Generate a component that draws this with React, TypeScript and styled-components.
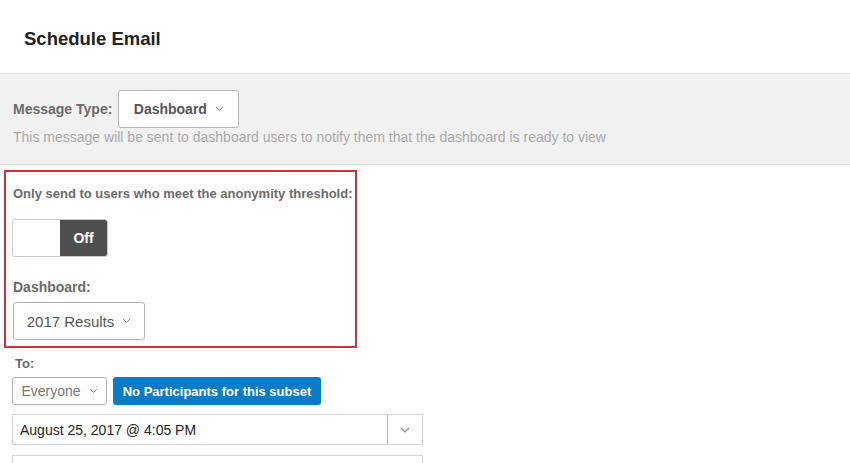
import React, { useState } from 'react'
import styled, { createGlobalStyle } from 'styled-components'

const Global = createGlobalStyle`
  html, body {
    margin: 0;
    padding: 0;
    background: #fff;
    font-family: "Liberation Sans", Arial, sans-serif;
  }
`

const Page = styled.div`
  width: 850px;
  height: 463px;
  overflow: hidden;
  background: #fff;
`

const Header = styled.div`
  height: 73px;
  display: flex;
  align-items: center;
  padding-left: 24px;
  box-sizing: border-box;
`

const Title = styled.h1`
  margin: 0;
  font-size: 18.5px;
  font-weight: bold;
  color: #222;
  padding-top: 4px;
`

const Band = styled.div`
  background: #f1f1f1;
  border-top: 1px solid #e6e6e6;
  border-bottom: 1px solid #dcdcdc;
  height: 92px;
  box-sizing: border-box;
  padding: 16px 0 0 13px;
`

const InlineRow = styled.div`
  display: flex;
  align-items: center;
  gap: 6px;
`

const Label = styled.div<{ $size?: number }>`
  font-size: ${p => p.$size ?? 13}px;
  font-weight: bold;
  color: #6b6b6b;
`

const Help = styled.div`
  margin-top: 1px;
  font-size: 14px;
  color: #aaa;
`

const Select = styled.div<{ $w: number; $h: number; $size?: number; $bold?: boolean; $color?: string }>`
  width: ${p => p.$w}px;
  height: ${p => p.$h}px;
  box-sizing: border-box;
  border: 1px solid #b5b5b5;
  border-radius: 3px;
  background: #fff;
  display: flex;
  align-items: center;
  justify-content: center;
  gap: 8px;
  font-size: ${p => p.$size ?? 14}px;
  font-weight: ${p => (p.$bold ? 'bold' : 'normal')};
  color: ${p => p.$color ?? '#555'};
`

const Chevron = ({ size = 9 }: { size?: number }) => (
  <svg width={size} height={size * 0.6} viewBox="0 0 10 6" fill="none">
    <path d="M1 1l4 4 4-4" stroke="#888" strokeWidth="1.1" />
  </svg>
)

const Body = styled.div`
  padding: 5px 0 0 4px;
`

const Highlight = styled.div`
  width: 353px;
  height: 178px;
  box-sizing: border-box;
  border: 2px solid #c9343f;
  padding: 14px 0 0 7px;
`

const Field = styled.div<{ $gap: number }>`
  display: flex;
  flex-direction: column;
  align-items: flex-start;
  gap: ${p => p.$gap}px;
`

const Toggle = styled.button`
  margin: 18px 0 22px -1px;
  width: 96px;
  height: 38px;
  padding: 0;
  display: flex;
  border: 1px solid #c8c8c8;
  border-radius: 3px;
  overflow: hidden;
  background: #fff;
  cursor: pointer;
  font-family: inherit;
`

const ToggleHalf = styled.span<{ $on: boolean }>`
  flex: 1;
  display: flex;
  align-items: center;
  justify-content: center;
  background: ${p => (p.$on ? '#4f4f4f' : '#fff')};
  color: #fff;
  font-size: 14px;
  font-weight: bold;
`

const Lower = styled.div`
  padding: 8px 0 0 12px;
`

const ToLabel = styled(Label)`
  padding-left: 3px;
  margin-bottom: 6px;
`

const Row = styled.div`
  display: flex;
  align-items: center;
  gap: 6px;
`

const BlueButton = styled.button`
  height: 28px;
  width: 208px;
  border: none;
  border-radius: 3px;
  background: #0a7bc6;
  color: #fff;
  font-family: inherit;
  font-size: 13px;
  font-weight: bold;
  padding: 0;
`

const DateInput = styled.div`
  margin-top: 9px;
  width: 411px;
  height: 31px;
  box-sizing: border-box;
  border: 1px solid #d6d6d6;
  display: flex;
  align-items: stretch;
  background: #fff;
`

const DateText = styled.div`
  flex: 1;
  display: flex;
  align-items: center;
  padding-left: 7px;
  font-size: 14px;
  color: #222;
`

const DateButton = styled.div`
  width: 34px;
  border-left: 1px solid #b8b8b8;
  display: flex;
  align-items: center;
  justify-content: center;
`

const NextInput = styled.div`
  margin-top: 10px;
  width: 411px;
  height: 30px;
  box-sizing: border-box;
  border: 1px solid #d6d6d6;
`

export default function App() {
  const [on, setOn] = useState(false)
  return (
    <Page>
      <Global />
      <Header>
        <Title>Schedule Email</Title>
      </Header>
      <Band>
        <InlineRow>
          <Label $size={14}>Message Type:</Label>
          <Select $w={121} $h={38} $bold $color="#555">
            Dashboard <Chevron />
          </Select>
        </InlineRow>
        <Help>This message will be sent to dashboard users to notify them that the dashboard is ready to view</Help>
      </Band>
      <Body>
        <Highlight>
          <Label>Only send to users who meet the anonymity threshold:</Label>
          <Toggle onClick={() => setOn(!on)}>
            <ToggleHalf $on={false} />
            <ToggleHalf $on={true}>{on ? 'On' : 'Off'}</ToggleHalf>
          </Toggle>
          <Field $gap={7}>
            <Label $size={14}>Dashboard:</Label>
            <Select $w={132} $h={38} $size={15}>
              2017 Results <Chevron />
            </Select>
          </Field>
        </Highlight>
      </Body>
      <Lower>
        <ToLabel>To:</ToLabel>
        <Row>
          <Select $w={95} $h={28} $size={14} $color="#777">
            Everyone <Chevron />
          </Select>
          <BlueButton>No Participants for this subset</BlueButton>
        </Row>
        <DateInput>
          <DateText>August 25, 2017 @ 4:05 PM</DateText>
          <DateButton>
            <Chevron size={10} />
          </DateButton>
        </DateInput>
        <NextInput />
      </Lower>
    </Page>
  )
}
